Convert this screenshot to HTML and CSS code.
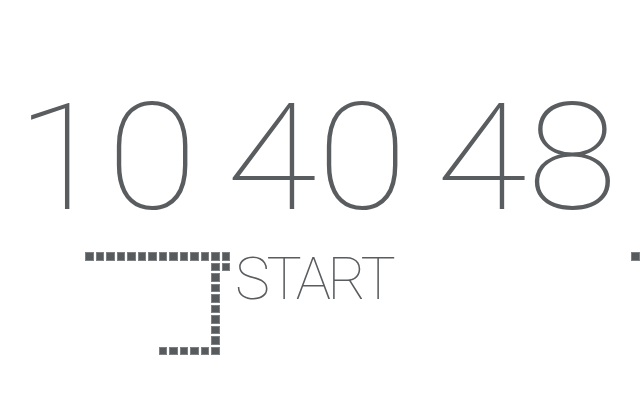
FILE: index.html
```html
<!DOCTYPE html>
<html>
<head>
<meta charset="utf-8">
<link rel="stylesheet" href="styles.css">
</head>
<body>
<main class="screen">
  <div class="clock">
    <span class="grp">10</span>
    <span class="grp">40</span>
    <span class="grp">48</span>
  </div>
  <div class="board">
    <span class="cell" style="grid-area:1/1"></span>
    <span class="cell" style="grid-area:1/2"></span>
    <span class="cell" style="grid-area:1/3"></span>
    <span class="cell" style="grid-area:1/4"></span>
    <span class="cell" style="grid-area:1/5"></span>
    <span class="cell" style="grid-area:1/6"></span>
    <span class="cell" style="grid-area:1/7"></span>
    <span class="cell" style="grid-area:1/8"></span>
    <span class="cell" style="grid-area:1/9"></span>
    <span class="cell" style="grid-area:1/10"></span>
    <span class="cell" style="grid-area:1/11"></span>
    <span class="cell" style="grid-area:1/12"></span>
    <span class="cell" style="grid-area:1/13"></span>
    <span class="cell" style="grid-area:1/14"></span>
    <span class="cell" style="grid-area:2/13"></span>
    <span class="cell" style="grid-area:2/14"></span>
    <span class="cell" style="grid-area:3/13"></span>
    <span class="cell" style="grid-area:4/13"></span>
    <span class="cell" style="grid-area:5/13"></span>
    <span class="cell" style="grid-area:6/13"></span>
    <span class="cell" style="grid-area:7/13"></span>
    <span class="cell" style="grid-area:8/13"></span>
    <span class="cell" style="grid-area:9/13"></span>
    <span class="cell" style="grid-area:10/13"></span>
    <span class="cell" style="grid-area:10/8"></span>
    <span class="cell" style="grid-area:10/9"></span>
    <span class="cell" style="grid-area:10/10"></span>
    <span class="cell" style="grid-area:10/11"></span>
    <span class="cell" style="grid-area:10/12"></span>
    <span class="cell" style="grid-area:1/53"></span>
    <div class="label">START</div>
  </div>
</main>
</body>
</html>
```
FILE: styles.css
```css
html, body {
  margin: 0;
  padding: 0;
  background: #ffffff;
}
.screen {
  width: 640px;
  height: 400px;
  overflow: hidden;
  font-family: Roboto, "Liberation Sans", sans-serif;
  color: #5a5d60;
}
.clock {
  display: flex;
  gap: 48px;
  padding: 85px 0 0 16px;
  font-size: 148px;
  font-weight: 100;
  line-height: 1;
  white-space: nowrap;
}
.grp {
  display: block;
  transform: scaleX(1.12);
  transform-origin: 0 0;
}
.board {
  display: grid;
  grid-template-columns: repeat(53, 8.5px);
  grid-auto-rows: 8.5px;
  gap: 2px;
  margin: 19px 0 0 85px;
}
.cell {
  display: block;
  background: #585b5e;
  box-shadow: inset 0 0 0 1px #7e8184;
}
.label {
  grid-column: 15 / span 25;
  grid-row: 1 / span 5;
  align-self: start;
  margin: -3px 0 0 3px;
  font-size: 59px;
  font-weight: 100;
  line-height: 1;
  letter-spacing: -3.5px;
  white-space: nowrap;
}
```
